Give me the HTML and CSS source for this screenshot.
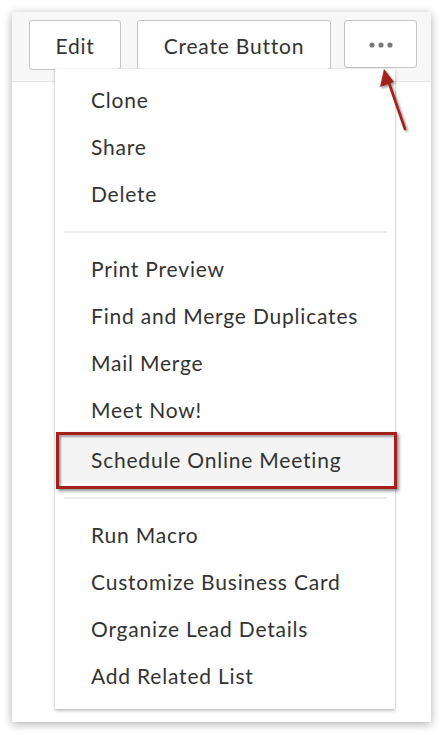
FILE: index.html
```html
<!DOCTYPE html>
<html lang="en">
<head>
<meta charset="utf-8">
<title>Lead actions menu</title>
<link rel="stylesheet" href="styles.css">
</head>
<body>
<div class="panel">
  <div class="toolbar">
    <button class="btn btn-edit">Edit</button>
    <button class="btn btn-create">Create Button</button>
    <button class="btn btn-more" aria-label="More actions">
      <svg width="24" height="6" viewBox="0 0 24 6"><circle cx="3" cy="3" r="2.6" fill="#7a7a7a"/><circle cx="12" cy="3" r="2.6" fill="#7a7a7a"/><circle cx="21" cy="3" r="2.6" fill="#7a7a7a"/></svg>
    </button>
  </div>
  <div class="body"></div>

  <ul class="menu">
    <li class="item">Clone</li>
    <li class="item">Share</li>
    <li class="item">Delete</li>
    <li class="sep"></li>
    <li class="item">Print Preview</li>
    <li class="item">Find and Merge Duplicates</li>
    <li class="item">Mail Merge</li>
    <li class="item">Meet Now!</li>
    <li class="item item-marked">Schedule Online Meeting</li>
    <li class="sep"></li>
    <li class="item">Run Macro</li>
    <li class="item">Customize Business Card</li>
    <li class="item">Organize Lead Details</li>
    <li class="item">Add Related List</li>
  </ul>

  <svg class="arrow" width="44" height="70" viewBox="0 0 44 70">
    <defs>
      <filter id="sh" x="-50%" y="-50%" width="200%" height="200%">
        <feDropShadow dx="1.5" dy="1.5" stdDeviation="1.2" flood-color="#000" flood-opacity="0.45"/>
      </filter>
    </defs>
    <g filter="url(#sh)">
      <line x1="36" y1="66" x2="19" y2="17" stroke="#a3201b" stroke-width="2.6" stroke-linecap="round"/>
      <polygon points="15,6 11,24 25,19" fill="#a3201b"/>
    </g>
  </svg>
</div>
</body>
</html>
```
FILE: styles.css
```css
* { box-sizing: border-box; }
html, body { margin: 0; padding: 0; background: #ffffff; }
body {
  font-family: "Lato", "Noto Sans", sans-serif;
  color: #333333;
  width: 444px;
  height: 735px;
  overflow: hidden;
}
.panel {
  position: relative;
  margin: 12px 0 0 12px;
  width: 419px;
  height: 710px;
  background: #ffffff;
  box-shadow: 0 2px 9px rgba(0, 0, 0, 0.32);
}
.toolbar {
  display: flex;
  align-items: flex-start;
  gap: 16px;
  height: 70px;
  padding: 8px 0 0 17px;
  background: #f7f7f7;
  border-bottom: 1px solid #e6e6e6;
}
.btn {
  font-family: inherit;
  font-size: 21px;
  letter-spacing: 0.8px;
  color: #333333;
  background: #ffffff;
  border: 1.5px solid #c4c4c4;
  border-radius: 3px;
  height: 50px;
  padding: 0;
  display: flex;
  align-items: center;
  justify-content: center;
}
.btn-edit { width: 92px; }
.btn-create { width: 194px; }
.btn-more { width: 73px; height: 48px; margin-left: -3px; padding-top: 2px; }

.menu {
  position: absolute;
  left: 43px;
  top: 57px;
  width: 340px;
  margin: 0;
  padding: 7px 0 10px 0;
  list-style: none;
  background: #ffffff;
  box-shadow: 0 2px 3px rgba(0, 0, 0, 0.22), 0 0 2px rgba(0, 0, 0, 0.12);
}
.item {
  position: relative;
  height: 47px;
  line-height: 47px;
  padding-left: 36px;
  font-size: 21px;
  letter-spacing: 0.8px;
  color: #333333;
  white-space: nowrap;
}
.sep {
  height: 2px;
  margin: 14px 8px 12px 9px;
  background: #ececec;
}
.item-marked {
  margin-top: 3px;
  background: #f4f4f4;
}
.item-marked::before {
  content: "";
  position: absolute;
  left: 1px;
  right: -2px;
  top: -4px;
  bottom: -6px;
  border: 3px solid #a3201b;
  box-shadow: 2px 2px 3px rgba(0, 0, 0, 0.45), inset 2px 2px 2px rgba(0, 0, 0, 0.35);
}
.arrow {
  position: absolute;
  left: 357px;
  top: 51px;
}
```
